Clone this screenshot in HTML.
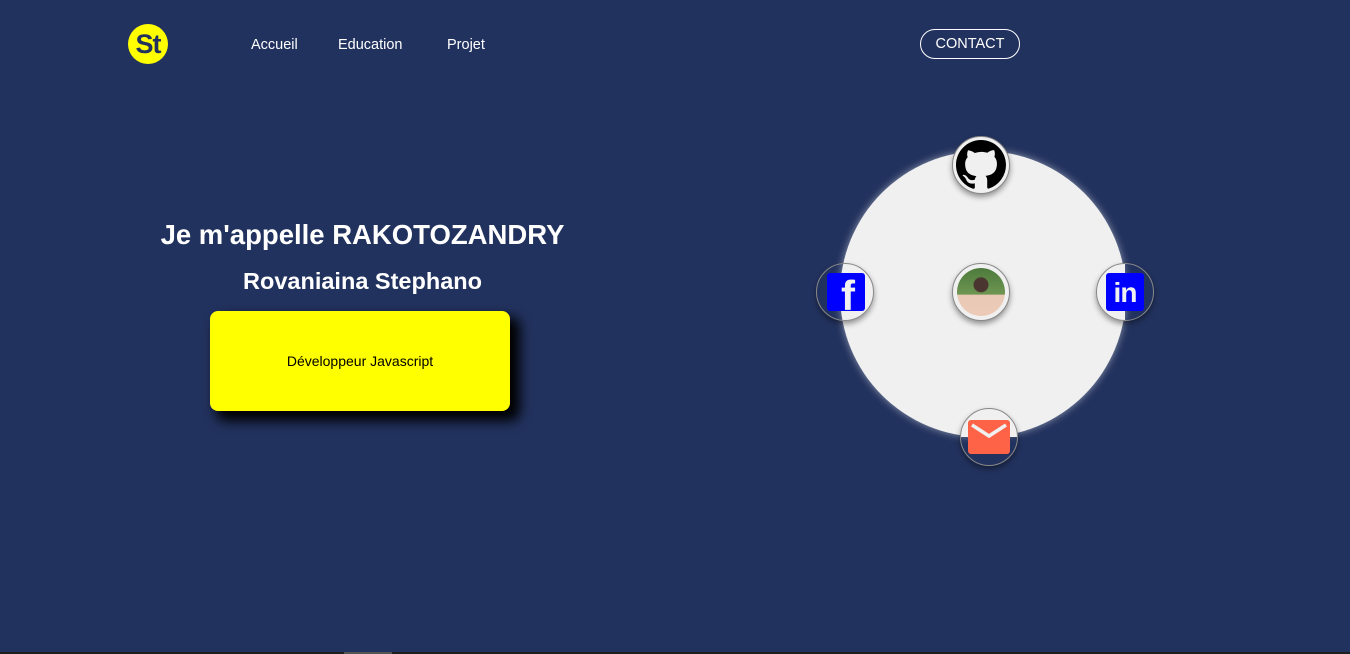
<!DOCTYPE html>
<html><head><meta charset="utf-8"><style>
*{margin:0;padding:0;box-sizing:border-box}
body{width:1350px;height:654px;background:#22325e;font-family:"Liberation Sans",Arial,sans-serif;position:relative;overflow:hidden;color:#fff}
.logo{position:absolute;left:128px;top:24px;width:40px;height:40px;border-radius:50%;background:#ffff00;color:#22325e;font-weight:bold;font-size:27px;line-height:40px;text-align:center;letter-spacing:-1px}
.nav{position:absolute;top:37px;font-size:14.5px}
.contact{position:absolute;left:920px;top:29px;width:100px;height:30px;border:1px solid #fff;border-radius:15px;font-size:14.5px;text-align:center;line-height:29px}
h1{position:absolute;left:0;width:725px;text-align:center;top:219px;font-size:27.5px}
h2{position:absolute;left:0;width:725px;text-align:center;top:268px;font-size:23.5px}
.card{position:absolute;left:210px;top:311px;width:300px;height:100px;background:#ffff00;border-radius:8px;box-shadow:8px 8px 12px 2px #000;color:#000;font-size:14px;text-align:center;line-height:100px}
.big{position:absolute;left:840px;top:151px;width:286px;height:286px;border-radius:50%;background:#f0f0f0;box-shadow:0 0 8px rgba(255,255,255,.5)}
.s{position:absolute;width:58px;height:58px;border-radius:50%;border:1px solid #888;box-shadow:0 3px 6px rgba(0,0,0,.4);display:flex;align-items:center;justify-content:center;overflow:hidden}
.bar{position:absolute;left:0;top:652px;width:1350px;height:2px;background:#1e1e1e}
</style></head><body>
<div class="logo">St</div>
<div class="nav" style="left:251px">Accueil</div>
<div class="nav" style="left:338px">Education</div>
<div class="nav" style="left:447px">Projet</div>
<div class="contact">CONTACT</div>
<h1>Je m'appelle RAKOTOZANDRY</h1>
<h2>Rovaniaina Stephano</h2>
<div class="card">Développeur Javascript</div>
<div class="big"></div>
<div class="s" style="left:952px;top:136px;background:#f0f0f0">
<svg width="50" height="50" viewBox="0 0 16 16"><path fill="#000" d="M8 0C3.58 0 0 3.58 0 8c0 3.54 2.29 6.53 5.47 7.590.4.07.55-.17.55-.38v-1.34c-2.23.48-2.7-1.07-2.7-1.07-.36-.93-.89-1.170-.89-1.17-.73-.5.06-.49.06-.49.8.06 1.23.83 1.23.83.71 1.22 1.87.87 2.33.66.07-.52.28-.87.51-1.07-1.78-.2-3.640-.89-3.64-3.95 0-.87.31-1.59.82-2.15-.08-.2-.36-1.02.08-2.12 0 0 .67-.21 2.2.82A7.6 7.6 0 0 1 8 3.8c.68 0 1.36.09 2 .27 1.53-1.04 2.2-.82 2.2-.82.44 1.1.16 1.92.08 2.12.51.56.82 1.27.82 2.15 0 3.07-1.87 3.75-3.65 3.95.29.25.54.73.54 1.48v2.2c0 .21.15.46.55.38A8.01 8.01 0 0 0 16 8c0-4.420-3.58-8-8-8z"/></svg></div>
<div class="s" style="left:816px;top:263px;background:transparent"><div style="width:38px;height:38px;background:#0000ff;border-radius:3px;position:relative;overflow:hidden;margin-left:2px"><span style="position:absolute;left:14px;top:2px;font-weight:bold;font-size:42px;line-height:42px;color:#f0f0f0">f</span></div></div>
<div class="s" style="left:1096px;top:263px;background:linear-gradient(90deg,#f0f0f0 50%,transparent 50%)"><div style="width:38px;height:38px;background:#0000ff;border-radius:3px;position:relative;font-weight:bold;color:#f0f0f0;font-size:28px;line-height:40px;text-align:center;letter-spacing:-1px">in</div></div>
<div class="s" style="left:952px;top:263px;background:#f0f0f0"><div style="width:48px;height:48px;border-radius:50%;background:radial-gradient(circle at 50% 35%,#4a3530 18%,transparent 20%),linear-gradient(180deg,#4d7a3c 0%,#6e9552 55%,#e9c9b6 56%,#eccab7 100%)"></div></div>
<div class="s" style="left:960px;top:408px;background:linear-gradient(180deg,#f0f0f0 50%,transparent 50%)"><svg width="42" height="34" viewBox="0 0 42 34"><rect x="0" y="0" width="42" height="34" rx="3" fill="#ff6347"/><path d="M4 5 L21 16 L38 5" stroke="#f0f0f0" stroke-width="3.5" fill="none"/></svg></div>
<div class="bar"></div><div style="position:absolute;left:344px;top:652px;width:48px;height:2px;background:#555"></div>
</body></html>
